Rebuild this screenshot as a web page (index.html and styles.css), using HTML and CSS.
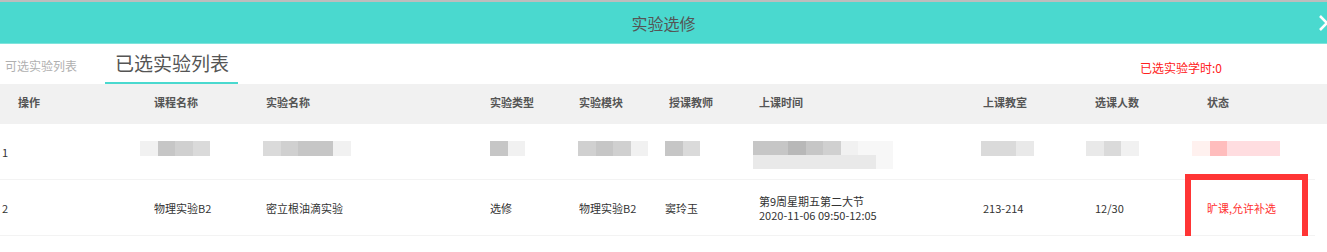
FILE: index.html
```html
<!DOCTYPE html>
<html lang="zh-CN">
<head>
    <meta charset="UTF-8">
    <title>实验选修</title>
    <link rel="stylesheet" href="styles.css">
</head>
<body>

<div class="dialog">
    <div class="dialog-title">
        <span>实验选修</span>
        <svg class="close" width="8" height="16" viewBox="0 0 8 16">
            <path d="M1 1 L8 8 L1 15" fill="none" stroke="#fff" stroke-width="2.6"/>
        </svg>
    </div>

    <div class="tabs">
        <a class="tab">可选实验列表</a>
        <a class="tab active">已选实验列表</a>
        <span class="hours">已选实验学时:0</span>
    </div>

    <div class="grid head">
        <div class="c first">操作</div>
        <div class="c">课程名称</div>
        <div class="c">实验名称</div>
        <div class="c">实验类型</div>
        <div class="c">实验模块</div>
        <div class="c">授课教师</div>
        <div class="c">上课时间</div>
        <div class="c">上课教室</div>
        <div class="c">选课人数</div>
        <div class="c">状态</div>
    </div>

    <!-- 第一行被打码 -->
    <div class="grid row">
        <div class="c first">1</div>
        <div class="c"><span class="blur" style="margin-left:-14px"><i class="g1"></i><i class="g5"></i><i class="g4"></i><i class="g3"></i></span></div>
        <div class="c"><span class="blur" style="margin-left:-3px"><i class="g3"></i><i class="g4"></i><i class="g5"></i><i class="g5"></i><i class="g1"></i></span></div>
        <div class="c"><span class="blur"><i class="g5"></i><i class="g1"></i></span></div>
        <div class="c"><span class="blur" style="margin-left:-1px"><i class="g4"></i><i class="g5"></i><i class="g4"></i><i class="g1"></i></span></div>
        <div class="c"><span class="blur" style="margin-left:-4px"><i class="g5"></i><i class="g3"></i></span></div>
        <div class="c">
            <span class="blur two" style="margin-left:-6px">
                <span class="line"><i class="g5"></i><i class="g5"></i><i class="g6"></i><i class="g5"></i><i class="g4"></i><i class="g1"></i><i class="g0"></i><i class="g0"></i></span>
                <span class="line"><i class="g2"></i><i class="g2"></i><i class="g2"></i><i class="g2"></i><i class="g2"></i><i class="g2"></i><i class="g2"></i><i class="g0"></i></span>
            </span>
        </div>
        <div class="c"><span class="blur" style="margin-left:-2px"><i class="g3"></i><i class="g3"></i><i class="g2"></i></span></div>
        <div class="c"><span class="blur" style="margin-left:-9px"><i class="g2"></i><i class="g3"></i><i class="g1"></i></span></div>
        <div class="c"><span class="blur" style="margin-left:-15px"><i class="r1"></i><i class="r3"></i><i class="r2"></i><i class="r2"></i><i class="r2"></i></span></div>
    </div>

    <div class="grid row">
        <div class="c first">2</div>
        <div class="c">物理实验B2</div>
        <div class="c">密立根油滴实验</div>
        <div class="c">选修</div>
        <div class="c">物理实验B2</div>
        <div class="c shift">窦玲玉</div>
        <div class="c">第9周星期五第二大节<br>2020-11-06 09:50-12:05</div>
        <div class="c">213-214</div>
        <div class="c">12/30</div>
        <div class="c status">旷课,允许补选<span class="mark"></span></div>
    </div>
</div>

</body>
</html>
```

FILE: styles.css
```css
body {
    margin: 0;
    font-family: "Noto Sans CJK SC", "Noto Sans", sans-serif;
    background-color: #fff;
    color: #333;
    overflow: hidden;
}

.dialog {
    width: 1327px;
    border-top: 2px solid #bdbdbd;
}

.dialog-title {
    height: 41px;
    background-color: #4ad9cf;
    border-bottom: 1px solid #7fe4dc;
    display: flex;
    justify-content: center;
    align-items: center;
    position: relative;
    font-size: 16px;
    color: #555;
}

.close {
    position: absolute;
    right: 0;
    top: 13px;
}

.tabs {
    height: 40px;
    display: flex;
    align-items: center;
    position: relative;
}

.tab {
    font-size: 12px;
    color: #b0b0b0;
    padding-left: 5px;
    margin-top: 2px;
}

.tab.active {
    font-size: 19px;
    color: #555;
    margin-left: 28px;
    padding: 0 9px 0 10px;
    height: 40px;
    line-height: 38px;
    box-sizing: border-box;
    border-bottom: 2px solid #4ad9cf;
    margin-top: 0;
}

.hours {
    font-size: 12px;
    color: #ff2020;
    margin-left: auto;
    margin-right: 105px;
    margin-top: 6px;
}

.grid {
    display: grid;
    grid-template-columns: 154px 112px 224px 89px 90px 90px 224px 112px 112px 108px;
    align-items: center;
    font-size: 11px;
}

.head {
    height: 40px;
    background-color: #f1f1f1;
    color: #555;
    font-weight: 600;
    padding-bottom: 4px;
    box-sizing: border-box;
}

.head .first {
    padding-left: 18px;
}

.row {
    width: 1315px;
    height: 55px;
    border-bottom: 1px solid #f3f3f3;
    line-height: 14px;
}

.row .first {
    padding-left: 2px;
}

.row .shift {
    margin-left: -4px;
}

.c {
    white-space: nowrap;
}

.status {
    color: #ff3030;
    position: relative;
}

.mark {
    position: absolute;
    left: -22px;
    top: -27px;
    width: 123px;
    height: 70px;
    border: 6px solid #ff3535;
    box-sizing: border-box;
}

.blur {
    display: inline-flex;
    height: 15px;
    margin-bottom: 6px;
    vertical-align: middle;
}

.blur.two {
    flex-direction: column;
    height: 28px;
    margin-bottom: -6px;
}

.blur .line {
    display: flex;
    height: 14px;
}

.blur i {
    display: block;
    width: 17.5px;
    height: 100%;
}

.g0 { background-color: #f7f7f7; }
.g1 { background-color: #f1f1f1; }
.g2 { background-color: #e9e9e9; }
.g3 { background-color: #dadada; }
.g4 { background-color: #d0d0d0; }
.g5 { background-color: #c6c6c6; }
.g6 { background-color: #b8b8b8; }
.r1 { background-color: #fff1ef; }
.r2 { background-color: #ffdde0; }
.r3 { background-color: #ffbdbd; }
```
